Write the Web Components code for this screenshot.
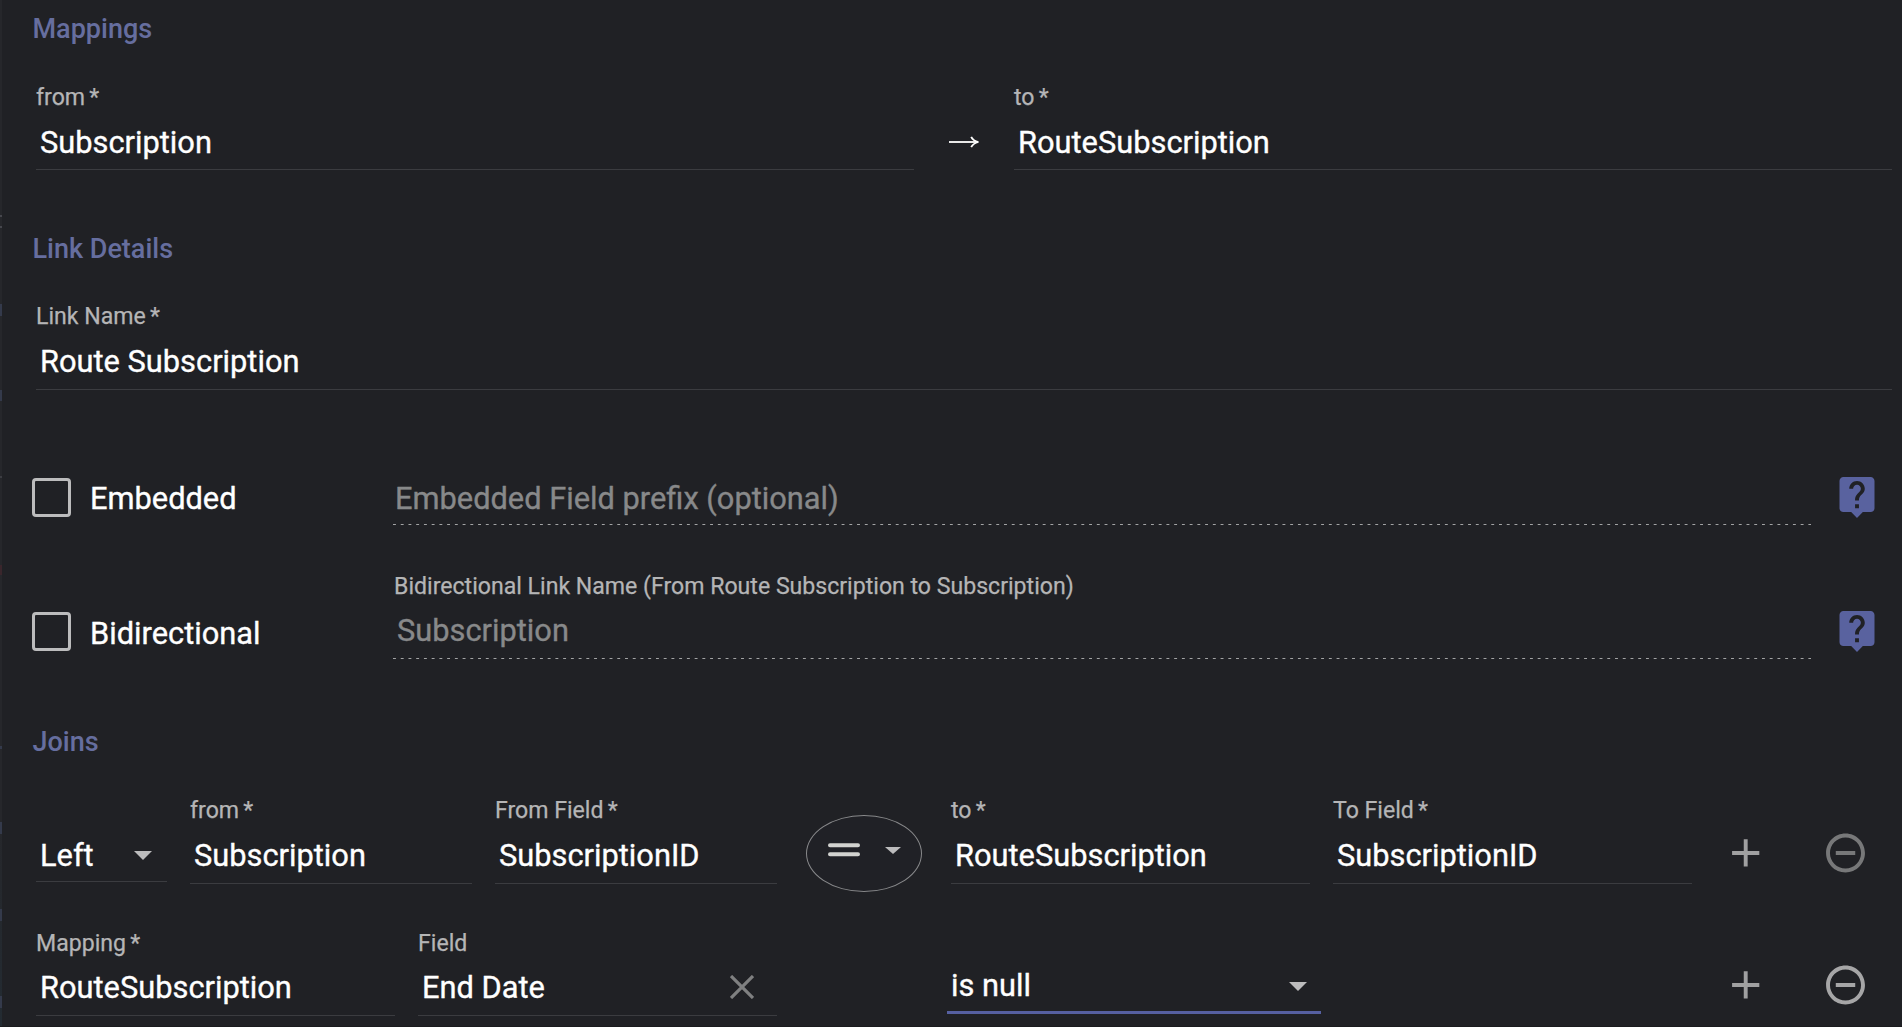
<!DOCTYPE html>
<html lang="en">
<head>
<meta charset="utf-8">
<title>Link editor</title>
<style>
html,body{margin:0;height:100%;background:#202125}
body{font-family:Roboto,sans-serif;color:#fff;overflow:hidden}
</style>
</head>
<body>
<link-editor></link-editor>
<script>
const define = (name, html) => customElements.define(name, class extends HTMLElement {
  constructor() {
    super();
    const t = document.createElement('template');
    t.innerHTML = html;
    this.attachShadow({mode: 'open'}).append(t.content.cloneNode(true));
  }
});

define('section-title', `<style>
:host{display:block;font-size:27px;line-height:32px;height:32px;font-weight:500;color:#666e9f;white-space:nowrap}
</style><slot></slot>`);

define('form-field', `<style>
:host{display:flex;flex-direction:column;box-sizing:border-box;white-space:nowrap;min-width:0}
.label{font-size:23.1px;line-height:30px;height:28px;color:#b5b5b6;-webkit-text-stroke:.25px}
.row{display:flex;align-items:center;height:36px;line-height:36px;font-size:30.8px;margin-top:var(--gap,13px);padding:0 0 var(--pad,9px) var(--inset,4px)}
.value{flex:1;margin-top:2px;-webkit-text-stroke:.35px}
.line{height:1px;background:#3b3c40}
:host([bare]) .label{display:none}
:host([bare]) .row{margin-top:0}
:host([disabled]) .value{color:#88898a}
:host([disabled]) .line{background:linear-gradient(to right,#a3a4a5 0,#a3a4a5 33%,transparent 0) 0 0/7.74px 1px repeat-x}
:host([focused]) .line{height:3px;background:#5660a1}
</style><div class="label"><slot name="label"></slot></div><div class="row"><div class="value"><slot></slot></div><slot name="suffix"></slot></div><div class="line"></div>`);

define('check-box', `<style>
:host{display:flex;align-items:center;gap:19px;height:39px;font-size:30.8px;line-height:36px;white-space:nowrap}
i{box-sizing:border-box;width:39px;height:39px;border:3px solid #bcbcbd;border-radius:4px}
span{padding-top:var(--drop,2px);-webkit-text-stroke:.35px}
</style><i></i><span><slot></slot></span>`);

define('help-icon', `<style>:host{display:block;width:47px;height:47px}svg{display:block;width:100%;height:100%;fill:#59629f}</style>
<svg viewBox="0.17 -0.1 24.17 24.17"><path d="M19 2H5c-1.11 0-2 .9-2 2v14c0 1.1.89 2 2 2h4l3 3 3-3h4c1.1 0 2-.9 2-2V4c0-1.1-.9-2-2-2zm-6 16h-2v-2h2v2zm2.07-7.75l-.9.92C13.45 11.9 13 12.5 13 14h-2v-.5c0-1.1.45-2.1 1.17-2.83l1.24-1.26c.37-.36.59-.86.59-1.41 0-1.1-.9-2-2-2s-2 .9-2 2H8c0-2.21 1.79-4 4-4s4 1.79 4 4c0 .88-.36 1.68-.93 2.25z"/></svg>`);

define('add-icon', `<style>:host{display:block;width:47px;height:47px}svg{display:block;width:100%;height:100%;fill:#a0a0a1}</style>
<svg viewBox="-0.19 -0.32 24.17 24.17"><path d="M19 13h-6v6h-2v-6H5v-2h6V5h2v6h6v2z"/></svg>`);

define('remove-icon', `<style>:host{display:block;width:47px;height:47px;color:#a6a6a7}:host([dim]){color:#777879}svg{display:block;width:100%;height:100%;fill:currentColor}</style>
<svg viewBox="-0.09 -0.32 24.17 24.17"><path d="M7 11v2h10v-2H7zm5-9C6.48 2 2 6.48 2 12s4.48 10 10 10 10-4.48 10-10S17.52 2 12 2zm0 18c-4.41 0-8-3.59-8-8s3.59-8 8-8 8 3.59 8 8-3.59 8-8 8z"/></svg>`);

define('drop-arrow', `<style>:host{display:block;width:18px;height:9px}svg{display:block;width:100%;height:100%}</style>
<svg viewBox="0 0 18 9" preserveAspectRatio="none"><path d="M0 0h18L9 9z" fill="#bcbcbd"/></svg>`);

define('clear-icon', `<style>:host{display:block;width:24px;height:24px}svg{display:block}</style>
<svg width="24" height="24" viewBox="0 0 24 24"><path d="M1 1l22 22M23 1L1 23" stroke="#7f8081" stroke-width="3.2"/></svg>`);

define('right-arrow', `<style>:host{display:block;width:30px;height:12px}svg{display:block}</style>
<svg width="30" height="12" viewBox="0 0 30 12"><path d="M0 6h29" stroke="#fff" stroke-width="1.8"/><path d="M22.2.8C23.4 3.3 25.5 5 29.4 6 25.5 7 23.4 8.7 22.2 11.2" fill="none" stroke="#fff" stroke-width="1.8"/></svg>`);

define('operator-pill', `<style>
:host{display:flex;box-sizing:border-box;width:116px;height:77px;border:1px solid #87888a;border-radius:50%;background:#202126;padding:0 20px 0 21px;justify-content:space-between}
svg{margin-top:27px}drop-arrow{width:16px;height:7px;margin-top:31px}
</style><svg width="32" height="14" viewBox="0 0 32 14"><path d="M2 2.2h28M2 11.2h28" stroke="#d2d3d0" stroke-width="4" stroke-linecap="round"/></svg><drop-arrow></drop-arrow>`);

define('link-editor', `<style>
:host{display:flex;box-sizing:border-box;width:1902px;height:1027px;background:#202125;border-bottom:1px solid #1a1b1e}
/* sliver of the page behind the dialog */
aside{width:2px;flex:none;background:
linear-gradient(#46474d,#46474d) 0 215px/2px 2px no-repeat,
linear-gradient(#46474d,#46474d) 0 226px/2px 2px no-repeat,
linear-gradient(#343a4b,#343a4b) 0 304px/2px 12px no-repeat,
linear-gradient(#343a4b,#343a4b) 0 390px/2px 11px no-repeat,
linear-gradient(#3c3d42,#3c3d42) 0 476px/2px 2px no-repeat,
linear-gradient(#3a262c,#3a262c) 0 565px/2px 10px no-repeat,
linear-gradient(#343a4b,#343a4b) 0 746px/2px 3px no-repeat,
linear-gradient(#343a4b,#343a4b) 0 822px/2px 12px no-repeat,
linear-gradient(#343a4b,#343a4b) 0 909px/2px 12px no-repeat,
linear-gradient(#343a4b,#343a4b) 0 996px/2px 12px no-repeat,
linear-gradient(#26272b,#26272b 80%,#232b32)}
main{flex:1;display:flex;flex-direction:column;padding-top:13px;min-width:0}
.r{display:flex;align-items:flex-start;flex:none}
.fields{padding-left:34px}
section-title{padding-left:30.5px;flex:none}
b{font-weight:400;margin-left:-1.5px}
</style>
<aside></aside>
<main>
<section-title>Mappings</section-title>
<div class="r fields" style="margin-top:38px">
<form-field style="width:878px"><span slot="label">from&nbsp;<b>*</b></span>Subscription</form-field>
<right-arrow style="margin:53px 35px 0 35px"></right-arrow>
<form-field style="width:878px"><span slot="label">to&nbsp;<b>*</b></span>RouteSubscription</form-field>
</div>
<section-title style="margin-top:63px">Link Details</section-title>
<div class="r fields" style="margin-top:37px;--pad:10px">
<form-field style="width:1856px"><span slot="label">Link Name&nbsp;<b>*</b></span>Route Subscription</form-field>
</div>
<div class="r" style="margin-top:83px;height:52px;padding-left:30px">
<check-box style="width:361px;margin-top:5px">Embedded</check-box>
<form-field bare disabled style="width:1418px;margin-top:7px;--pad:8px;--inset:2px">Embedded Field prefix (optional)</form-field>
<help-icon style="margin-left:23px"></help-icon>
</div>
<div class="r" style="margin-top:47px;height:87px;padding-left:30px;--pad:10px;--gap:12px">
<check-box style="width:361px;margin-top:40px;--drop:4px">Bidirectional</check-box>
<form-field disabled style="width:1418px"><span slot="label" style="padding-left:1px">Bidirectional Link Name (From Route Subscription to Subscription)</span>Subscription</form-field>
<help-icon style="margin:35px 0 0 23px"></help-icon>
</div>
<section-title style="margin-top:67px">Joins</section-title>
<div class="r fields" style="margin-top:38px;height:88px;--pad:10px">
<form-field bare style="width:131px;margin-top:41px;--pad:8px">Left<drop-arrow slot="suffix" style="margin-right:15px"></drop-arrow></form-field>
<form-field style="width:282px;margin-left:23px"><span slot="label">from&nbsp;<b>*</b></span>Subscription</form-field>
<form-field style="width:282px;margin-left:23px"><span slot="label">From Field&nbsp;<b>*</b></span>SubscriptionID</form-field>
<operator-pill style="margin:19px 29px 0"></operator-pill>
<form-field style="width:359px"><span slot="label">to&nbsp;<b>*</b></span>RouteSubscription</form-field>
<form-field style="width:359px;margin-left:23px"><span slot="label">To Field&nbsp;<b>*</b></span>SubscriptionID</form-field>
<add-icon style="margin:33px 0 0 30px"></add-icon>
<remove-icon dim style="margin:33px 0 0 53px"></remove-icon>
</div>
<div class="r fields" style="margin-top:45px;height:87px;--pad:10px;--gap:12px">
<form-field style="width:359px"><span slot="label">Mapping&nbsp;<b>*</b></span>RouteSubscription</form-field>
<form-field style="width:359px;margin-left:23px"><span slot="label">Field</span>End Date<clear-icon slot="suffix" style="margin-right:23px"></clear-icon></form-field>
<form-field bare focused style="width:374px;margin:38px 0 0 170px;--pad:8px">is null<drop-arrow slot="suffix" style="margin:2px 14px 0 0"></drop-arrow></form-field>
<add-icon style="margin:32px 0 0 401px"></add-icon>
<remove-icon style="margin:32px 0 0 53px"></remove-icon>
</div>
</main>`);
</script>
</body>
</html>
